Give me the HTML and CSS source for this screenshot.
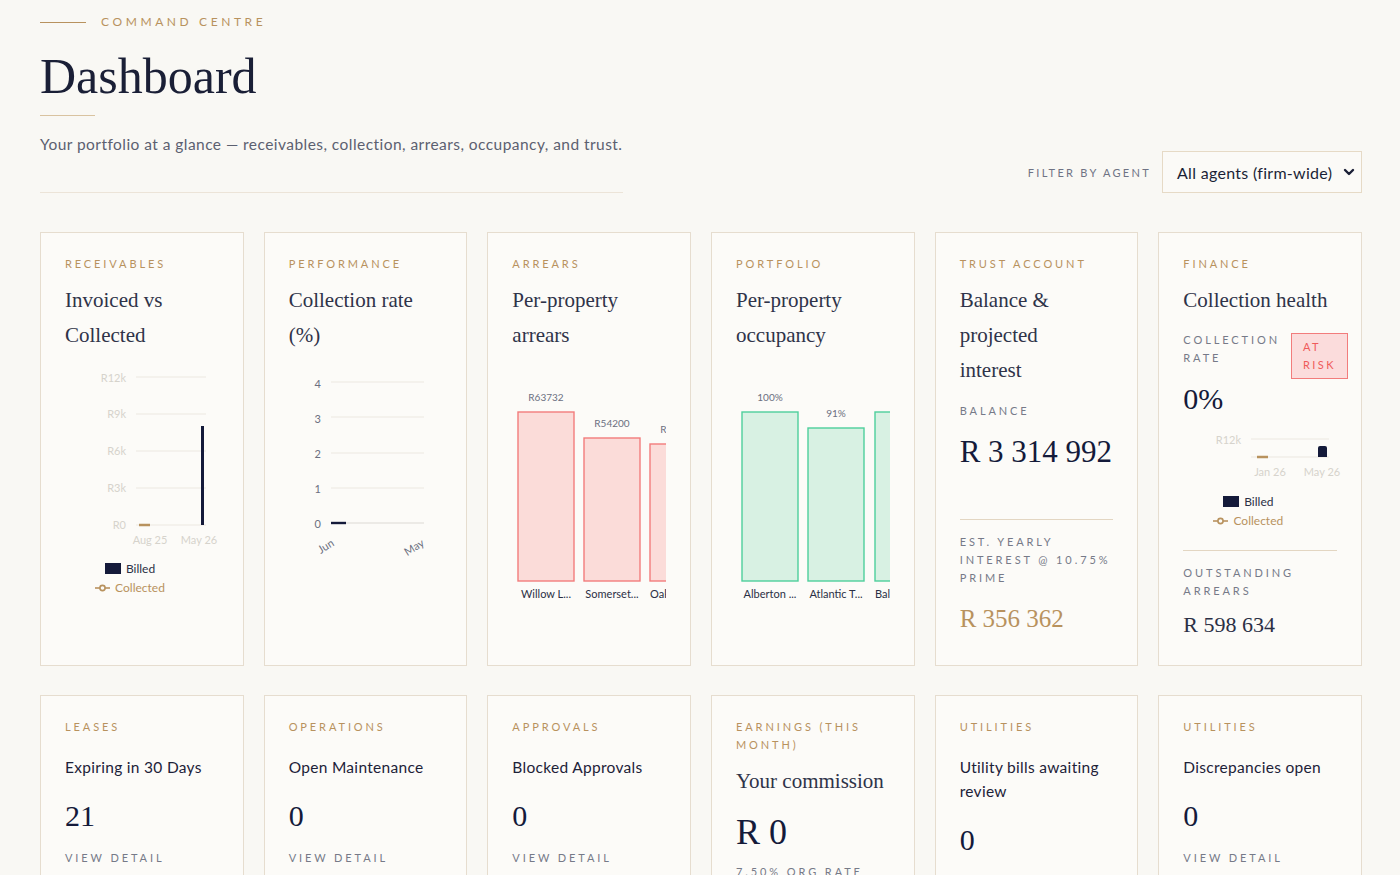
FILE: index.html
```html
<!DOCTYPE html>
<html lang="en">
<head>
    <meta charset="UTF-8">
    <meta name="viewport" content="width=device-width, initial-scale=1.0">
    <title>Dashboard</title>
    <link rel="stylesheet" href="styles.css">
</head>
<body>
<div class="page">
    <header class="top">
        <div class="intro">
            <div class="eyebrow"><span class="eyebrow-line"></span>COMMAND CENTRE</div>
            <h1>Dashboard</h1>
            <div class="short-rule"></div>
            <p class="lead">Your portfolio at a glance — receivables, collection, arrears, occupancy, and trust.</p>
        </div>
        <div class="filter">
            <span class="filter-label">FILTER BY AGENT</span>
            <div class="select">
                <span>All agents (firm-wide)</span>
                <svg width="12" height="8" viewBox="0 0 12 8"><path d="M2 2 L6 6 L10 2" fill="none" stroke="#1a1f36" stroke-width="2.4" stroke-linecap="round" stroke-linejoin="round"/></svg>
            </div>
        </div>
    </header>

    <section class="grid">
        <!-- receivables -->
        <div class="card">
            <div class="label">Receivables</div>
            <div class="title">Invoiced vs Collected</div>
            <svg class="chart" width="154" height="185" viewBox="0 0 154 185">
                <g stroke="#ece8e1" stroke-width="1">
                    <line x1="71" y1="12" x2="141" y2="12"/>
                    <line x1="71" y1="49" x2="141" y2="49"/>
                    <line x1="71" y1="86" x2="141" y2="86"/>
                    <line x1="71" y1="123" x2="141" y2="123"/>
                    <line x1="71" y1="160" x2="141" y2="160"/>
                </g>
                <g class="axis-light" text-anchor="end">
                    <text x="61" y="17">R12k</text>
                    <text x="61" y="53">R9k</text>
                    <text x="61" y="90">R6k</text>
                    <text x="61" y="127">R3k</text>
                    <text x="61" y="164">R0</text>
                </g>
                <rect x="136" y="61" width="3" height="99" fill="#141a3a"/>
                <line x1="74" y1="160" x2="85" y2="160" stroke="#b8925e" stroke-width="2.5"/>
                <g class="axis-light" text-anchor="middle">
                    <text x="85" y="179">Aug 25</text>
                    <text x="134" y="179">May 26</text>
                </g>
            </svg>
            <div class="legend">
                <div class="legend-item"><span class="swatch"></span>Billed</div>
                <div class="legend-item gold">
                    <svg width="15" height="8" viewBox="0 0 15 8"><line x1="0" y1="4" x2="15" y2="4" stroke="#b8925e" stroke-width="1.6"/><circle cx="7.5" cy="4" r="2.6" fill="#fcfbf8" stroke="#b8925e" stroke-width="1.6"/></svg>
                    Collected
                </div>
            </div>
        </div>

        <!-- performance -->
        <div class="card">
            <div class="label">Performance</div>
            <div class="title">Collection rate (%)</div>
            <svg class="chart" width="154" height="195" viewBox="0 0 154 195">
                <g stroke="#ece8e1" stroke-width="1">
                    <line x1="42" y1="17" x2="135" y2="17"/>
                    <line x1="42" y1="52" x2="135" y2="52"/>
                    <line x1="42" y1="88" x2="135" y2="88"/>
                    <line x1="42" y1="123" x2="135" y2="123"/>
                </g>
                <line x1="42" y1="158" x2="135" y2="158" stroke="#dcd9d3" stroke-width="1.2"/>
                <line x1="42" y1="158" x2="57" y2="158" stroke="#141a3a" stroke-width="2.4"/>
                <g class="axis-dark" text-anchor="end">
                    <text x="32" y="23">4</text>
                    <text x="32" y="58">3</text>
                    <text x="32" y="93">2</text>
                    <text x="32" y="128">1</text>
                    <text x="32" y="163">0</text>
                </g>
                <g class="axis-dark" text-anchor="end">
                    <text x="46" y="180" transform="rotate(-32 46 180)">Jun</text>
                    <text x="136" y="180" transform="rotate(-32 136 180)">May</text>
                </g>
            </svg>
        </div>

        <!-- arrears -->
        <div class="card">
            <div class="label">Arrears</div>
            <div class="title">Per-property arrears</div>
            <svg class="chart" width="154" height="240" viewBox="0 0 154 240">
                <g fill="#fbdcd9" stroke="#f27c7c" stroke-width="1.4">
                    <rect x="6" y="47" width="56" height="169"/>
                    <rect x="72" y="73" width="56" height="143"/>
                    <rect x="138" y="79" width="56" height="137"/>
                </g>
                <g class="bar-value" text-anchor="middle">
                    <text x="34" y="36">R63732</text>
                    <text x="100" y="62">R54200</text>
                    <text x="166" y="68">R52100</text>
                </g>
                <g class="bar-name" text-anchor="middle">
                    <text x="34" y="233">Willow L...</text>
                    <text x="100" y="233">Somerset...</text>
                </g>
                <text class="bar-name" x="138" y="233">Oakwood...</text>
            </svg>
        </div>

        <!-- portfolio -->
        <div class="card">
            <div class="label">Portfolio</div>
            <div class="title">Per-property occupancy</div>
            <svg class="chart" width="154" height="240" viewBox="0 0 154 240">
                <g fill="#d8f1e3" stroke="#4fcf9c" stroke-width="1.4">
                    <rect x="6" y="47" width="56" height="169"/>
                    <rect x="72" y="63" width="56" height="153"/>
                    <rect x="139" y="47" width="56" height="169"/>
                </g>
                <g class="bar-value" text-anchor="middle">
                    <text x="34" y="36">100%</text>
                    <text x="100" y="52">91%</text>
                    <text x="167" y="36">100%</text>
                </g>
                <g class="bar-name" text-anchor="middle">
                    <text x="34" y="233">Alberton ...</text>
                    <text x="100" y="233">Atlantic T...</text>
                </g>
                <text class="bar-name" x="139" y="233">Ballito ...</text>
            </svg>
        </div>

        <!-- trust -->
        <div class="card">
            <div class="label">Trust Account</div>
            <div class="title">Balance &amp;<br>projected<br>interest</div>
            <div class="sub trust-sub">Balance</div>
            <div class="big-value">R 3 314 992</div>
            <div class="divider trust-divider"></div>
            <div class="sub">Est. yearly<br>interest @ 10.75%<br>prime</div>
            <div class="gold-value">R 356 362</div>
        </div>

        <!-- finance -->
        <div class="card">
            <div class="label">Finance</div>
            <div class="title">Collection health</div>
            <div class="rate-row">
                <div class="sub">Collection<br>rate</div>
                <div class="badge">At<br>risk</div>
            </div>
            <div class="pct">0%</div>
            <svg class="mini-chart" width="154" height="50" viewBox="0 0 154 50">
                <line x1="68" y1="8" x2="146" y2="8" stroke="#ece8e1" stroke-width="1"/>
                <line x1="68" y1="26" x2="146" y2="26" stroke="#ebe7e0" stroke-width="1"/>
                <text class="axis-light" x="58" y="13" text-anchor="end">R12k</text>
                <path d="M135 26 V17 Q135 15 137 15 H142 Q144 15 144 17 V26 Z" fill="#141a3a"/>
                <line x1="74" y1="26" x2="85" y2="26" stroke="#b8925e" stroke-width="2.5"/>
                <g class="axis-light" text-anchor="middle">
                    <text x="87" y="45">Jan 26</text>
                    <text x="139" y="45">May 26</text>
                </g>
            </svg>
            <div class="legend fin-legend">
                <div class="legend-item"><span class="swatch"></span>Billed</div>
                <div class="legend-item gold">
                    <svg width="15" height="8" viewBox="0 0 15 8"><line x1="0" y1="4" x2="15" y2="4" stroke="#b8925e" stroke-width="1.6"/><circle cx="7.5" cy="4" r="2.6" fill="#fcfbf8" stroke="#b8925e" stroke-width="1.6"/></svg>
                    Collected
                </div>
            </div>
            <div class="divider fin-divider"></div>
            <div class="sub">Outstanding<br>arrears</div>
            <div class="arrears-value">R 598 634</div>
        </div>
    </section>

    <section class="grid bottom-row">
        <div class="card">
            <div class="label">Leases</div>
            <div class="kpi-title">Expiring in 30 Days</div>
            <div class="kpi">21</div>
            <div class="sub link">View detail</div>
        </div>
        <div class="card">
            <div class="label">Operations</div>
            <div class="kpi-title">Open Maintenance</div>
            <div class="kpi">0</div>
            <div class="sub link">View detail</div>
        </div>
        <div class="card">
            <div class="label">Approvals</div>
            <div class="kpi-title">Blocked Approvals</div>
            <div class="kpi">0</div>
            <div class="sub link">View detail</div>
        </div>
        <div class="card">
            <div class="label">Earnings (this month)</div>
            <div class="title">Your commission</div>
            <div class="kpi-lg">R 0</div>
            <div class="sub rate-note">7.50% org rate</div>
        </div>
        <div class="card">
            <div class="label">Utilities</div>
            <div class="kpi-title">Utility bills awaiting review</div>
            <div class="kpi">0</div>
            <div class="sub link">View detail</div>
        </div>
        <div class="card">
            <div class="label">Utilities</div>
            <div class="kpi-title">Discrepancies open</div>
            <div class="kpi">0</div>
            <div class="sub link">View detail</div>
        </div>
    </section>
</div>
</body>
</html>
```

FILE: styles.css
```css
* {
    box-sizing: border-box;
}
body {
    margin: 0;
    background: #f9f8f4;
    font-family: Lato, "Open Sans", sans-serif;
    color: #1d2238;
}
.page {
    padding: 14px 38px 40px 40px;
}

/* header */
.top {
    display: flex;
    justify-content: space-between;
    align-items: flex-end;
}
.intro {
    width: 583px;
    border-bottom: 1px solid #ece4d8;
    padding-bottom: 37px;
}
.eyebrow {
    display: flex;
    align-items: center;
    gap: 15px;
    font-size: 12px;
    line-height: 16px;
    letter-spacing: 3.6px;
    color: #b8925e;
}
.eyebrow-line {
    width: 46px;
    height: 1px;
    background: #b8925e;
}
h1 {
    font-family: "Liberation Serif", serif;
    font-weight: normal;
    font-size: 50px;
    line-height: 60px;
    margin: 16px 0 0;
    color: #1a1f36;
}
.short-rule {
    width: 55px;
    height: 1px;
    background: #d9c3a0;
    margin-top: 9px;
}
.lead {
    margin: 17px 0 0;
    font-size: 15.5px;
    line-height: 22px;
    letter-spacing: 0.45px;
    color: #5c6070;
}
.filter {
    display: flex;
    align-items: center;
    gap: 11px;
}
.filter-label {
    font-size: 11px;
    letter-spacing: 2.3px;
    color: #6f7384;
}
.select {
    width: 200px;
    height: 42px;
    border: 1px solid #e6dac6;
    background: #fbfaf7;
    display: flex;
    align-items: center;
    justify-content: space-between;
    padding: 0 6px 0 14px;
    font-size: 16px;
    letter-spacing: 0.3px;
    color: #1a1f36;
}

/* cards */
.grid {
    display: grid;
    grid-template-columns: repeat(6, minmax(0, 1fr));
    gap: 20px;
    margin-top: 39px;
}
.bottom-row {
    margin-top: 29px;
}
.card {
    background: #fcfbf8;
    border: 1px solid #e6ddcf;
    padding: 22px 24px 24px;
}
.label {
    font-size: 11px;
    line-height: 18px;
    letter-spacing: 2.9px;
    text-transform: uppercase;
    color: #b8925e;
}
.sub {
    font-size: 11px;
    line-height: 18px;
    letter-spacing: 2.9px;
    text-transform: uppercase;
    color: #767a88;
}
.title {
    font-family: "Liberation Serif", serif;
    font-size: 21px;
    line-height: 35px;
    margin-top: 10px;
    color: #2f3349;
}
.chart {
    display: block;
    margin-top: 12px;
}
.chart text, .mini-chart text {
    font-family: Lato, sans-serif;
}
.axis-light {
    font-size: 11px;
    fill: #d6d3cc;
}
.axis-dark {
    font-size: 11px;
    fill: #6b6f80;
}
.bar-value {
    font-size: 10px;
    fill: #6b6f80;
}
.bar-name {
    font-size: 11px;
    fill: #2b2f45;
}
.legend {
    width: 130px;
    display: flex;
    flex-direction: column;
    align-items: center;
    margin-top: 9px;
    font-size: 12px;
    line-height: 19px;
}
.legend-item {
    display: flex;
    align-items: center;
    gap: 5px;
    color: #2b2f45;
}
.legend-item.gold {
    color: #b8925e;
}
.swatch {
    width: 16px;
    height: 11px;
    background: #141a3a;
}

/* trust */
.trust-sub {
    margin-top: 14px;
}
.big-value {
    font-family: "Liberation Serif", serif;
    font-size: 31px;
    line-height: 44px;
    margin-top: 10px;
    white-space: nowrap;
    color: #141a3a;
}
.divider {
    height: 1px;
    background: #e3d6c2;
}
.trust-divider {
    margin: 45px 0 13px;
}
.gold-value {
    font-family: "Liberation Serif", serif;
    font-size: 25px;
    line-height: 34px;
    margin-top: 15px;
    color: #b8925e;
}

/* finance */
.rate-row {
    display: flex;
    justify-content: space-between;
    align-items: flex-start;
    margin-top: 13px;
    margin-right: -11px;
}
.badge {
    flex: none;
    width: 57px;
    margin-top: 2px;
    padding: 4px 11px;
    background: #fbdcdc;
    border: 1px solid #f27c7c;
    color: #ef5b5b;
    font-size: 11px;
    line-height: 18px;
    letter-spacing: 2.4px;
    text-transform: uppercase;
}
.pct {
    font-family: "Liberation Serif", serif;
    font-size: 30px;
    line-height: 40px;
    color: #141a3a;
}
.mini-chart {
    display: block;
    margin-top: 12px;
    overflow: visible;
}
.fin-legend {
    margin-top: 11px;
}
.fin-divider {
    margin: 20px 0 13px;
}
.arrears-value {
    font-family: "Liberation Serif", serif;
    font-size: 22px;
    line-height: 32px;
    margin-top: 9px;
    color: #2b2f45;
}

/* kpi row */
.kpi-title {
    font-size: 15.5px;
    line-height: 24px;
    letter-spacing: 0.3px;
    margin-top: 19px;
    color: #1d2238;
}
.kpi {
    font-family: "Liberation Serif", serif;
    font-size: 30px;
    line-height: 40px;
    margin-top: 17px;
    color: #141a3a;
}
.link {
    margin-top: 13px;
}
.kpi-lg {
    font-family: "Liberation Serif", serif;
    font-size: 36px;
    line-height: 44px;
    margin-top: 11px;
    color: #141a3a;
}
.rate-note {
    margin-top: 9px;
}
```
